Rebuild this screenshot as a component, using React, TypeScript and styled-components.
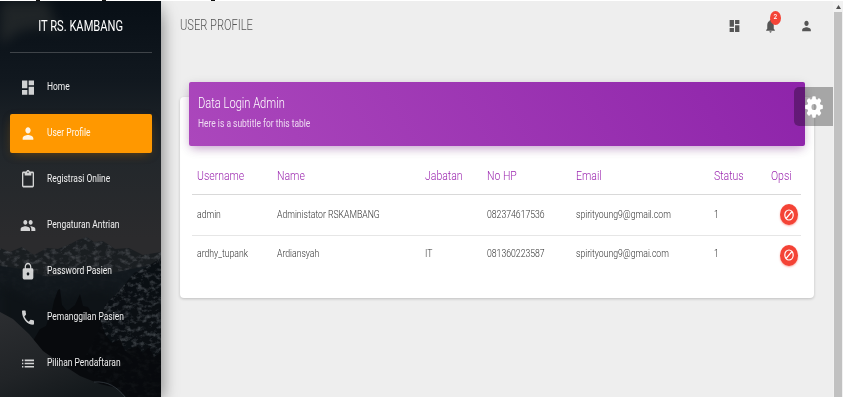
import React from 'react';
import styled, { createGlobalStyle } from 'styled-components';
import { MdDashboard, MdPerson, MdContentPaste, MdPeople, MdLock, MdPhone, MdList, MdNotifications } from 'react-icons/md';

const Global = createGlobalStyle`
  * { box-sizing: border-box; }
  body { margin: 0; background: #fff; font-family: Roboto, "Liberation Sans", sans-serif; overflow: hidden; }
`;

const Screen = styled.div`
  display: flex;
  flex-direction: column;
  width: 843px;
  height: 400px;
  background: #fff;
`;

const TopStrip = styled.div`
  display: flex;
  flex: none;
  height: 1px;
  padding-left: 36px;
`;

const StripMark = styled.i<{ $gap?: number }>`
  width: 4px;
  height: 1px;
  margin-left: ${p => p.$gap ?? 0}px;
  background: #111;
`;

const Page = styled.div`
  position: relative;
  display: flex;
  height: 396px;
  background: #eee;
  overflow: hidden;
`;

const Sidebar = styled.aside`
  position: relative;
  z-index: 1;
  flex: none;
  width: 161px;
  height: 396px;
  color: #fff;
  background: #0b1218;
  box-shadow: 6px 8px 16px -5px rgba(0, 0, 0, 0.36), 2px 0 12px rgba(0, 0, 0, 0.12);
`;

const Scenery = styled.svg`
  position: absolute;
  inset: 0;
`;

const SideContent = styled.div`
  position: relative;
  display: flex;
  flex-direction: column;
  padding: 0 9px 0 10px;
`;

const Text = styled.span<{ $size?: number; $weight?: number; $origin?: string; $squeeze?: number; $opacity?: number }>`
  display: inline-block;
  font-size: ${p => p.$size ?? 10.74}px;
  font-weight: ${p => p.$weight ?? 300};
  line-height: 1.3;
  white-space: nowrap;
  opacity: ${p => p.$opacity ?? 1};
  transform: scaleX(${p => p.$squeeze ?? 0.807});
  transform-origin: ${p => p.$origin ?? 'left'} center;
`;

const Brand = styled.div`
  display: flex;
  align-items: center;
  justify-content: center;
  height: 52px;
  border-bottom: 1px solid rgba(180, 180, 180, 0.3);
`;

const Menu = styled.nav`
  display: flex;
  flex-direction: column;
  gap: 7px;
  padding-top: 15px;
`;

const MenuItem = styled.a<{ $active?: boolean }>`
  display: flex;
  align-items: center;
  gap: 11px;
  height: 39px;
  padding: 0 0 1px 10px;
  border-radius: 2px;
  background: ${p => (p.$active ? '#ff9800' : 'transparent')};
  box-shadow: ${p => (p.$active ? '0 3px 10px -3px rgba(255, 152, 0, .4), 0 3px 8px rgba(0, 0, 0, .2)' : 'none')};
`;

const Glyph = styled.span<{ $w: number; $h: number; $opacity?: number }>`
  display: flex;
  flex: none;
  opacity: ${p => p.$opacity ?? 1};
  svg { width: ${p => p.$w}px; height: ${p => p.$h}px; }
`;

const Main = styled.main`
  flex: 1;
  min-width: 0;
  padding: 0 18px 0 19px;
`;

const Navbar = styled.header`
  display: flex;
  align-items: center;
  justify-content: space-between;
  height: 48px;
  padding-top: 1px;
  color: #555;
`;

const NavTitle = styled.h1`
  display: flex;
  margin: 0;
  padding-top: 1px;
`;

const NavIcons = styled.div`
  display: flex;
  gap: 23px;
  padding-right: 2px;
`;

const BellWrap = styled.span`
  position: relative;
`;

const Badge = styled.span`
  position: absolute;
  left: 6px;
  top: -7px;
  display: flex;
  align-items: center;
  justify-content: center;
  width: 11px;
  height: 14px;
  border-radius: 50%;
  background: #f44336;
  color: #fff;
`;

const Card = styled.section`
  width: 634px;
  height: 201px;
  margin-top: 48px;
  padding: 0 9px;
  border-radius: 4px;
  background: #fff;
  box-shadow: 0 1px 3px rgba(0, 0, 0, 0.2);
`;

const CardHeader = styled.div`
  display: flex;
  flex-direction: column;
  align-items: flex-start;
  height: 64px;
  padding: 13px 9px 0;
  gap: 4px;
  border-radius: 2px;
  transform: translateY(-15px);
  color: #fff;
  background: linear-gradient(60deg, #ab47bc, #8e24aa);
  box-shadow: 0 4px 9px -3px rgba(156, 39, 176, 0.4), 0 3px 12px rgba(0, 0, 0, 0.12);
`;

const Table = styled.div`
  margin: -4px 4px 0 3px;
`;

const Row = styled.div<{ $head?: boolean }>`
  display: grid;
  grid-template-columns: 80px 148px 62px 89px 138px 57px 1fr;
  align-items: center;
  height: ${p => (p.$head ? 37 : 40.5)}px;
  padding: ${p => (p.$head ? 2 : 0)}px 3px 0 5px;
  color: ${p => (p.$head ? '#9c27b0' : '#333')};
  & + & { border-top: 1px solid #d9d9d9; }
  & + & + & { border-top-color: #e6e6e6; }
  & + & > span { margin-top: -3px; }
`;

const BanButton = styled.button`
  display: flex;
  align-items: center;
  justify-content: center;
  justify-self: end;
  width: 18px;
  height: 21px;
  padding: 0;
  border: 0;
  border-radius: 50%;
  background: #f44336;
  box-shadow: 0 1px 2px rgba(244, 67, 54, 0.45);
`;

const Settings = styled.div`
  position: absolute;
  right: 10px;
  top: 86px;
  z-index: 2;
  display: flex;
  align-items: center;
  justify-content: center;
  width: 39px;
  height: 39px;
  border-radius: 5px 0 0 5px;
  background: rgba(0, 0, 0, 0.3);
  color: #fff;
`;

const Scrollbar = styled.div`
  flex: none;
  width: 10px;
  padding: 0 1px;
  background: #f1f1f1;
`;

const ScrollArrow = styled.div`
  display: flex;
  align-items: center;
  justify-content: center;
  height: 11px;
`;

const Thumb = styled.div`
  height: 385px;
  background: #c1c1c1;
`;

const menu = [
  { label: 'Home', Icon: MdDashboard },
  { label: 'User Profile', Icon: MdPerson, active: true },
  { label: 'Registrasi Online', Icon: MdContentPaste },
  { label: 'Pengaturan Antrian', Icon: MdPeople },
  { label: 'Password Pasien', Icon: MdLock },
  { label: 'Pemanggilan Pasien', Icon: MdPhone },
  { label: 'Pilihan Pendaftaran', Icon: MdList },
];

const columns = ['Username', 'Name', 'Jabatan', 'No HP', 'Email', 'Status', 'Opsi'];
const users = [
  ['admin', 'Administator RSKAMBANG', '', '082374617536', 'spirityoung9@gmail.com', '1'],
  ['ardhy_tupank', 'Ardiansyah', 'IT', '081360223587', 'spirityoung9@gmai.com', '1'],
];

function Gear() {
  return (
    <svg viewBox="0 0 24 24" preserveAspectRatio="none" fill="currentColor" aria-hidden>
      <circle cx="12" cy="12" r="6.2" fill="none" stroke="currentColor" strokeWidth="5.6" />
      {[0, 45, 90, 135, 180, 225, 270, 315].map(a => (
        <path key={a} d="M9.2 5L9.8 .5Q12 -.2 14.2 .5L14.8 5Z" transform={`rotate(${a} 12 12)`} />
      ))}
    </svg>
  );
}

function Mountains() {
  return (
    <Scenery width="161" height="396" viewBox="0 0 161 396" aria-hidden>
      <defs>
        <linearGradient id="sky" x1="0" y1="0" x2="0" y2="1">
          <stop offset="0" stopColor="#080f16" />
          <stop offset=".2" stopColor="#11181f" />
          <stop offset=".38" stopColor="#22272b" />
          <stop offset=".6" stopColor="#2b2b2d" />
        </linearGradient>
        <linearGradient id="snow" x1="0" y1="0" x2=".6" y2="1">
          <stop offset="0" stopColor="#2c2e31" />
          <stop offset=".6" stopColor="#212427" />
          <stop offset="1" stopColor="#14191c" />
        </linearGradient>
        <filter id="rock" x="0" y="0" width="100%" height="100%" colorInterpolationFilters="sRGB">
          <feTurbulence type="fractalNoise" baseFrequency=".16 .22" numOctaves="4" seed="8" />
          <feColorMatrix values="0 0 0 0 .27  0 0 0 0 .29  0 0 0 0 .31  3 0 0 0 -1.4" result="n" />
          <feComposite in="n" in2="SourceGraphic" operator="in" result="m" />
          <feMerge><feMergeNode in="SourceGraphic" /><feMergeNode in="m" /></feMerge>
        </filter>
        <filter id="haze" x="-30%" y="-30%" width="160%" height="160%" colorInterpolationFilters="sRGB"><feGaussianBlur stdDeviation="6" /></filter>
        <filter id="soft" colorInterpolationFilters="sRGB"><feGaussianBlur stdDeviation=".7" /></filter>
      </defs>
      <rect width="161" height="396" fill="url(#sky)" />
      <path d="M0 0H48L54 20L62 34L44 26L20 30L0 44Z" fill="#41433f" opacity=".4" filter="url(#haze)" />
      <path d="M0 247L10 251L22 246L34 254L47 247L58 248L70 243L78 239L87 236L94 241L103 240L115 248L129 247L143 254L161 251V300H0Z" fill="#14191d" filter="url(#rock)" opacity=".7" />
      <path d="M0 265L22 268L48 276L80 270L112 272L161 262V396H0Z" fill="#12181d" opacity=".9" filter="url(#soft)" />
      <path d="M0 282L40 300L90 288L118 290V396H0Z" fill="#0e1317" filter="url(#haze)" />
      <path d="M161 257L145 267L134 272L118 291L105 304L98 330L80 366L130 396H161Z" fill="#090d11" filter="url(#rock)" opacity=".8" />
      <path d="M30 345L40 328L46 325L49 316L52 309L54 300L58 289L60 288L62 304L67 310L70 308L75 304L80 293L83 305L88 306L94 315L100 318L105 333L112 342L120 338L125 350L137 345L143 352L149 346L154 356L161 352V396H44Z" fill="#07090c" opacity=".85" filter="url(#soft)" />
      <path d="M0 311L13 318L29 333L43 350L60 362L80 375L100 383L117 387L126 396H0Z" fill="url(#snow)" />
      <path d="M94 381C108 380 117 386 125 396" stroke="#394047" fill="none" opacity=".7" />
    </Scenery>
  );
}

export default function App() {
  return (
    <>
      <Global />
      <Screen>
        <TopStrip><StripMark /><StripMark $gap={62} /><StripMark $gap={105} /></TopStrip>
        <Page>
          <Sidebar>
            <Mountains />
            <SideContent>
              <Brand><Text $size={13.8} $weight={400} $origin="center">IT RS. KAMBANG</Text></Brand>
              <Menu>
                {menu.map(({ label, Icon, active }) => (
                  <MenuItem key={label} $active={active}>
                    <Glyph $w={16} $h={19} $opacity={active ? 0.9 : 0.8}><Icon preserveAspectRatio="none" /></Glyph>
                    <Text $weight={400} $squeeze={0.788} $opacity={0.93}>{label}</Text>
                  </MenuItem>
                ))}
              </Menu>
            </SideContent>
          </Sidebar>
          <Main>
            <Navbar>
              <NavTitle><Text $size={13.8}>USER PROFILE</Text></NavTitle>
              <NavIcons>
                <Glyph $w={13} $h={16}><MdDashboard preserveAspectRatio="none" /></Glyph>
                <BellWrap>
                  <Glyph $w={13} $h={16}><MdNotifications preserveAspectRatio="none" /></Glyph>
                  <Badge><Text $size={8} $weight={500} $origin="center">2</Text></Badge>
                </BellWrap>
                <Glyph $w={13} $h={16}><MdPerson preserveAspectRatio="none" /></Glyph>
              </NavIcons>
            </Navbar>
            <Card>
              <CardHeader>
                <Text $size={13.8}>Data Login Admin</Text>
                <Text $weight={400} $squeeze={0.787} $opacity={0.8}>Here is a subtitle for this table</Text>
              </CardHeader>
              <Table>
                <Row $head>{columns.map(c => <Text key={c} $size={13}>{c}</Text>)}</Row>
                {users.map(u => (
                  <Row key={u[0]}>
                    {u.map((cell, i) => <Text key={i}>{cell}</Text>)}
                    <BanButton aria-label="Nonaktifkan">
                      <svg width="10" height="12" viewBox="0 0 20 24" preserveAspectRatio="none" fill="none" stroke="#fff" strokeWidth="2.4">
                        <ellipse cx="10" cy="12" rx="8.4" ry="10" />
                        <path d="M16 5L4 19" />
                      </svg>
                    </BanButton>
                  </Row>
                ))}
              </Table>
            </Card>
          </Main>
          <Scrollbar>
            <ScrollArrow><svg width="5" height="4" viewBox="0 0 5 4"><path d="M0 4L2.5 0L5 4Z" fill="#505050" /></svg></ScrollArrow>
            <Thumb />
          </Scrollbar>
          <Settings><Glyph $w={18} $h={22}><Gear /></Glyph></Settings>
        </Page>
      </Screen>
    </>
  );
}
